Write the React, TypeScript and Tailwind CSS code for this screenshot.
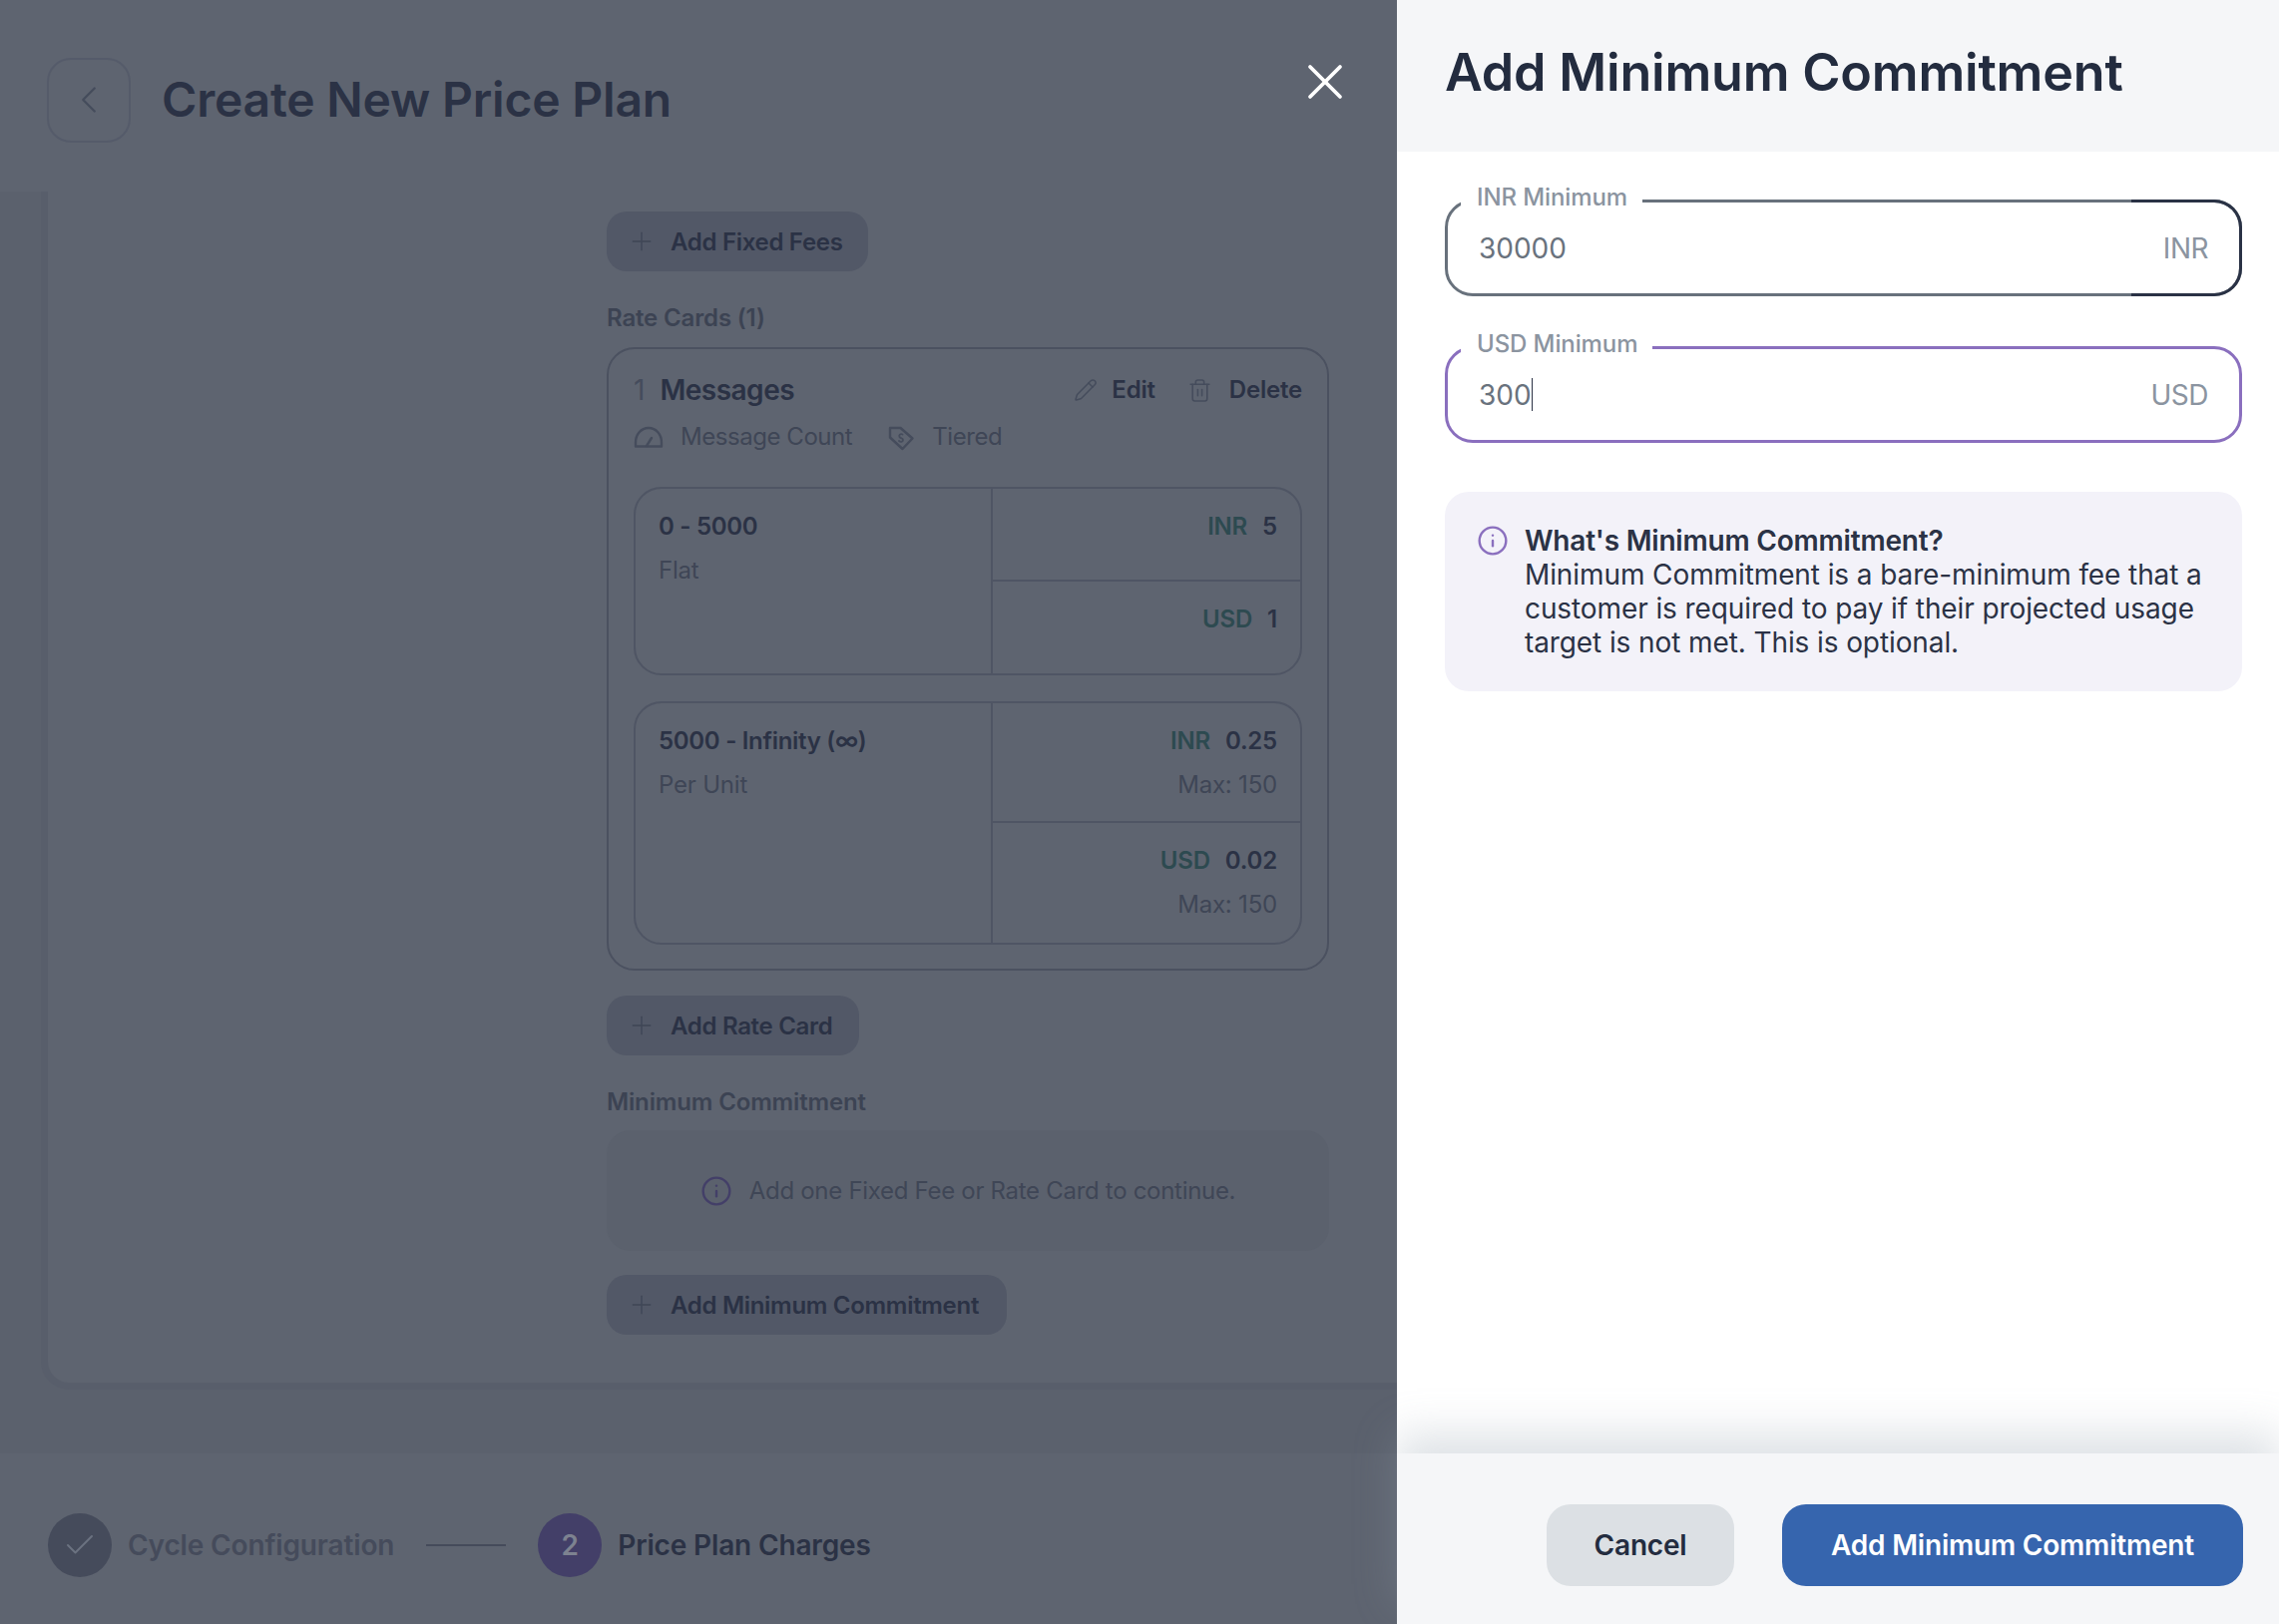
import { Check, ChevronLeft, Info, Pencil, Plus, Trash2, X } from 'lucide-react'

const ink = 'text-[#2b3245]'

function AddButton({ label, width }: { label: string; width: string }) {
  return (
    <div className={`flex h-[60px] items-center gap-[14px] rounded-[20px] bg-[#525867] pl-[20px] ${width}`}>
      <Plus size={30} strokeWidth={1.1} className="text-[#3f4656]" />
      <span className={`pt-[2px] text-[24px] font-semibold tracking-[-0.3px] ${ink}`}>{label}</span>
    </div>
  )
}

function SectionLabel({ label }: { label: string }) {
  return <div className="text-[24px] leading-[30px] font-semibold tracking-[-0.15px] text-[#3c4353]">{label}</div>
}

function Price({ cur, value, max, height }: { cur: string; value: string; max?: boolean; height: string }) {
  return (
    <div className={`flex flex-col items-end px-[23px] pt-[23px] last:pt-[23px] ${height}`}>
      <div className="flex gap-[15px] text-[24px] leading-[30px] font-semibold tracking-[-0.2px]">
        <span className="text-[#2d4a50]">{cur}</span>
        <span className={ink}>{value}</span>
      </div>
      {max && <div className="mt-[14px] text-[24px] leading-[30px] tracking-[-0.2px] text-[#3f4656]">Max: 150</div>}
    </div>
  )
}

function Tier(props: { range: string; kind: string; rows: { cur: string; value: string }[]; max?: boolean; height: string; rowHeight: string }) {
  return (
    <div className={`flex overflow-hidden rounded-[28px] border-2 border-[#4f5564] ${props.height}`}>
      <div className="w-[358px] shrink-0 border-r-2 border-[#4f5564] pt-[23px] pl-[23px]">
        <div className={`text-[24px] leading-[30px] font-semibold tracking-[-0.3px] ${ink}`}>{props.range}</div>
        <div className="mt-[14px] text-[24px] leading-[30px] tracking-[-0.2px] text-[#3f4656]">{props.kind}</div>
      </div>
      <div className="flex flex-1 flex-col divide-y-2 divide-[#4f5564]">
        {props.rows.map((r) => (
          <Price key={r.cur} cur={r.cur} value={r.value} max={props.max} height={props.rowHeight} />
        ))}
      </div>
    </div>
  )
}

function GaugeIcon() {
  return (
    <svg width="30" height="22" viewBox="0 0 30 22" fill="none" stroke="#454c5c" strokeWidth="2.4" strokeLinejoin="round" strokeLinecap="round">
      <path d="M2 20.5v-4C2 8.500 7.500 2 15 2s13 6.500 13 14.500v4z" />
      <path d="M13 20l5-8" />
    </svg>
  )
}

function TagIcon() {
  return (
    <svg width="28" height="27" viewBox="0 0 28 27" fill="none" stroke="#454c5c" strokeWidth="2.400" strokeLinejoin="round" strokeLinecap="round">
      <path d="M3 4h10.500L25.500 14.500l-10 10.500L3 13.500z" />
      <path d="M15.500 10.500c-2-1-4 .5-3 2.500s3.500 1 3.500 3-2.500 2.500-4 1" strokeWidth="1.800" />
    </svg>
  )
}

function Field(props: { label: string; value: string; unit: string; focused?: boolean }) {
  const border = props.focused ? 'border-[#8a6fbe]' : 'border-[#68717c]'
  return (
    <div className={`relative flex h-[97px] items-center rounded-[28px] border-[3px] bg-white pr-[31px] pl-[31px] ${border}`}>
      <label className="absolute -top-[20px] left-[13px] bg-white pr-[15px] pl-[16px] text-[24px] leading-[30px] font-medium tracking-[-0.1px] text-[#8b94a0]">
        {props.label}
      </label>
      <span className="flex flex-1 items-center text-[28px] text-[#69727d]">
        {props.value}
        {props.focused && <span className="h-[33px] w-px bg-[#2b3245]" />}
      </span>
      {!props.focused && (
        <span className="absolute -top-[3px] -right-[3px] -bottom-[3px] w-[111px] rounded-r-[28px] border-y-[3px] border-r-[3px] border-[#2a3245]" />
      )}
      <span className="text-[28px] tracking-[-0.5px] text-[#8b94a0]">{props.unit}</span>
    </div>
  )
}

export default function App() {
  return (
    <div className="flex h-[1628px] w-[2284px] overflow-hidden bg-[#5e6470] font-['Inter',sans-serif]">
      {/* Dimmed page behind the drawer */}
      <div className="flex w-[1400px] shrink-0 flex-col">
        <header className="flex h-[192px] shrink-0 items-center justify-between pt-[8px] pr-[42px] pl-[47px]">
          <div className="flex items-center gap-[31px]">
            <div className="flex h-[85px] w-[84px] items-center justify-center rounded-[24px] border-2 border-[#555b6a]">
              <ChevronLeft size={46} strokeWidth={1.200} className="text-[#454c5c]" />
            </div>
            <h1 className={`text-[48px] font-semibold tracking-[-0.2px] ${ink}`}>Create New Price Plan</h1>
          </div>
          <X size={60} strokeWidth={1.500} className="-mt-[36px] text-white" />
        </header>

        <main className="flex-1 overflow-hidden bg-[#5b616d]">
          <div className="-mr-[40px] ml-[41px] h-[1201px] rounded-b-[28px] border-x-[7px] border-b-[7px] border-[#585e6b] bg-[#5e6470] pt-[20px] pl-[560px]">
            <div className="flex w-[724px] flex-col">
              <AddButton label="Add Fixed Fees" width="w-[262px]" />
              <div className="mt-[32px]">
                <SectionLabel label="Rate Cards (1)" />
              </div>
              <div className="mt-[14px] h-[625px] rounded-[28px] border-2 border-[#4b5160] px-[25px] pt-[23px]">
                <div className="flex items-center justify-between leading-[36px]">
                  <div className="flex items-center gap-[15px] text-[28px]">
                    <span className="text-[#454c5c]">1</span>
                    <span className={`font-semibold tracking-[-0.5px] ${ink}`}>Messages</span>
                  </div>
                  <div className={`flex items-center text-[24px] font-semibold tracking-[-0.2px] ${ink}`}>
                    <Pencil size={24} strokeWidth={1.500} className="text-[#454c5c]" />
                    <span className="ml-[14px]">Edit</span>
                    <Trash2 size={25} strokeWidth={1.500} className="ml-[32px] text-[#454c5c]" />
                    <span className="ml-[17px]">Delete</span>
                  </div>
                </div>
                <div className="mt-[14px] flex items-center text-[24px] leading-[30px] tracking-[-0.45px] text-[#3f4656]">
                  <GaugeIcon />
                  <span className="ml-[17px]">Message Count</span>
                  <span className="ml-[35px]"><TagIcon /></span>
                  <span className="ml-[17px]">Tiered</span>
                </div>
                <div className="mt-[35px] flex flex-col gap-[26px]">
                  <Tier
                    range="0 - 5000"
                    kind="Flat"
                    height="h-[189px]"
                    rowHeight="h-[93px]"
                    rows={[{ cur: 'INR', value: '5' }, { cur: 'USD', value: '1' }]}
                  />
                  <Tier
                    range="5000 - Infinity (∞)"
                    kind="Per Unit"
                    max
                    height="h-[244px]"
                    rowHeight="h-[120px]"
                    rows={[{ cur: 'INR', value: '0.25' }, { cur: 'USD', value: '0.02' }]}
                  />
                </div>
              </div>
              <div className="mt-[25px]">
                <AddButton label="Add Rate Card" width="w-[253px]" />
              </div>
              <div className="mt-[32px]">
                <SectionLabel label="Minimum Commitment" />
              </div>
              <div className="mt-[13px] flex h-[121px] items-center justify-center gap-[17px] rounded-[24px] bg-[#5b616d] text-[24px] tracking-[-0.3px] text-[#3f4656]">
                <Info size={32} strokeWidth={1.800} className="text-[#433f68]" />
                <span>Add one Fixed Fee or Rate Card to continue.</span>
              </div>
              <div className="mt-[24px]">
                <AddButton label="Add Minimum Commitment" width="w-[401px]" />
              </div>
            </div>
          </div>
        </main>

        <footer className="flex h-[171px] shrink-0 items-center pt-[12px] pl-[48px] text-[28px] font-semibold tracking-[-0.15px]">
          <div className="flex h-[64px] w-[64px] items-center justify-center rounded-full bg-[#454b5b]">
            <Check size={36} strokeWidth={1.300} className="text-[#6b7280]" />
          </div>
          <span className="ml-[16px] text-[#454b5b]">Cycle Configuration</span>
          <span className="ml-[32px] h-[2px] w-[80px] bg-[#454b5b]" />
          <div className="ml-[32px] flex h-[64px] w-[64px] items-center justify-center rounded-full bg-[#433f68] text-[#7d8290]">2</div>
          <span className={`ml-[16px] ${ink}`}>Price Plan Charges</span>
        </footer>
      </div>

      {/* Drawer */}
      <aside className="flex w-[884px] shrink-0 flex-col bg-white">
        <div className="flex h-[152px] shrink-0 items-center bg-[#f5f6f8] pb-[6px] pl-[48px]">
          <h2 className="text-[52px] font-semibold tracking-[-0.2px] text-[#232c3f]">Add Minimum Commitment</h2>
        </div>
        <div className="flex flex-1 flex-col px-[48px] pt-[48px] pr-[37px]">
          <div className="flex flex-col gap-[50px]">
            <Field label="INR Minimum" value="30000" unit="INR" />
            <Field label="USD Minimum" value="300" unit="USD" focused />
          </div>
          <div className="mt-[49px] flex h-[200px] gap-[16px] rounded-[24px] bg-[#f3f2f9] px-[32px] pt-[32px] text-[28px] leading-[34px] tracking-[-0.1px] text-[#2b3245]">
            <Info size={32} strokeWidth={1.800} className="mt-[1px] shrink-0 text-[#8a6fbe]" />
            <div>
              <div className="font-semibold tracking-[-0.2px]">What's Minimum Commitment?</div>
              <div>Minimum Commitment is a bare-minimum fee that a customer is required to pay if their projected usage target is not met. This is optional.</div>
            </div>
          </div>
        </div>
        <div className="flex h-[171px] shrink-0 items-center justify-end gap-[48px] bg-[#f5f6f8] pt-[12px] pr-[36px] shadow-[0_-20px_40px_rgba(145,158,171,0.3)]">
          <button className="h-[82px] w-[188px] rounded-[24px] bg-[#dce0e4] text-[28px] font-semibold tracking-[-0.2px] text-[#232c3f]">Cancel</button>
          <button className="h-[82px] w-[462px] rounded-[24px] bg-[#3665ae] text-[28px] font-semibold tracking-[-0.2px] text-white">Add Minimum Commitment</button>
        </div>
      </aside>
    </div>
  )
}
